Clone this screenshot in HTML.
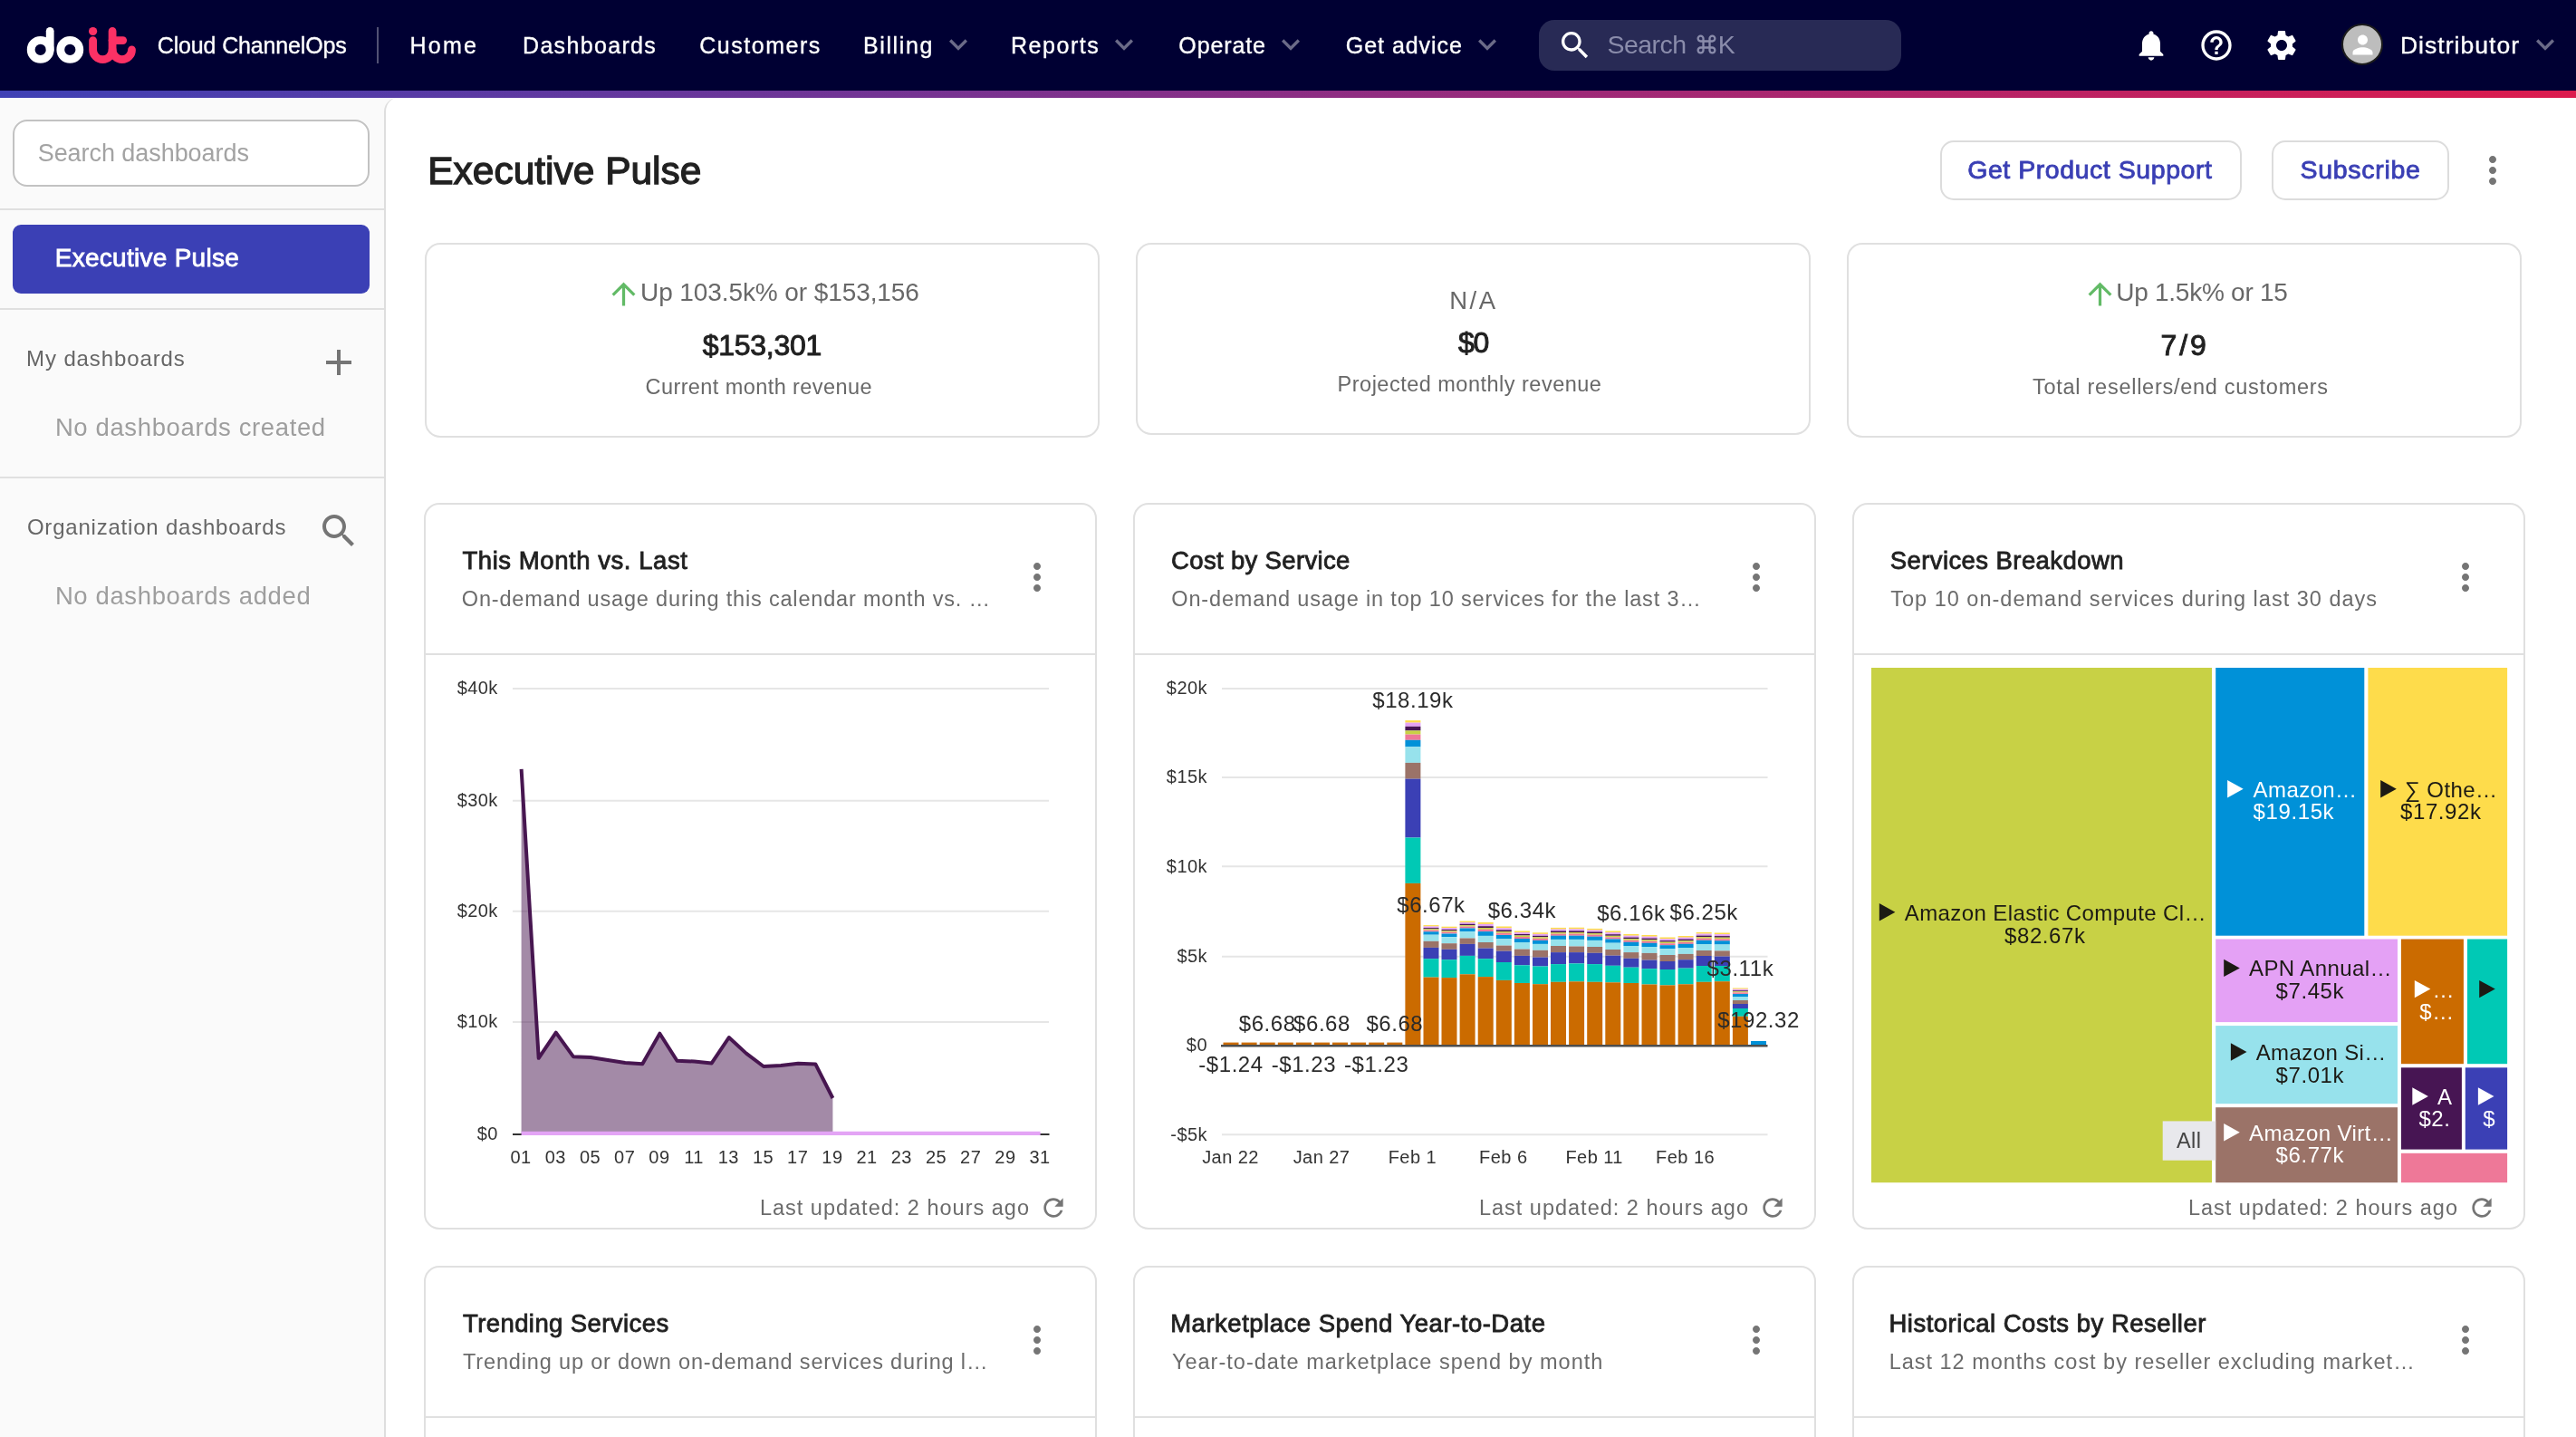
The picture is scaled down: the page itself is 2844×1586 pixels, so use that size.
<!DOCTYPE html>
<html lang="en"><head><meta charset="utf-8"><title>Executive Pulse</title>
<style>
*{box-sizing:border-box;margin:0;padding:0}
html,body{width:2844px;height:1586px;overflow:hidden;background:#ffffff}
body{position:relative;font-family:"Liberation Sans",sans-serif}
#app{position:absolute;left:0;top:0;width:2844px;height:1586px;overflow:hidden;will-change:transform}
.t{position:absolute;white-space:nowrap;display:block}
.i{position:absolute;display:block;overflow:visible}
.nav{position:absolute;left:0;top:0;width:2844px;height:100px;background:#000033}
.grad{position:absolute;left:0;top:100px;width:2844px;height:8px;background:linear-gradient(90deg,#3f41b5 0%,#8b2e84 50%,#dc1b4d 100%)}
.vdiv{position:absolute;width:2px;background:rgba(255,255,255,.32)}
.srch{position:absolute;background:#282a55;border-radius:17px}
.ava{position:absolute;width:46px;height:46px;border-radius:50%;background:#bdbdbd;border:2px solid #1c1c1c}
.side{position:absolute;left:0;top:108px;width:440px;height:1478px;background:#fafafa;border-top:1px solid #ffffff}
.side>*{margin-top:-109px}
.sbox{position:absolute;background:#ffffff;border:2px solid #c2c2c2;border-radius:16px}
.act{position:absolute;background:#3b40b5;border-radius:9px}
.hdiv{position:absolute;height:2px;background:#e0e0e0}
.main{position:absolute;left:0;top:0;width:0;height:0}
.panel{position:absolute;left:424px;top:108px;width:2440px;height:1500px;background:#ffffff;border-left:2px solid #dedede;border-radius:15px 0 0 0}
.btn{position:absolute;border:2px solid #dcdcdc;border-radius:15px;background:#ffffff}
.kpi{position:absolute;border:2px solid #e0e0e0;border-radius:17px;background:#ffffff}
.card{position:absolute;border:2px solid #e0e0e0;border-radius:17px;background:#ffffff}
</style></head><body><div id="app">
<header class="nav">
<svg class="i" style="left:0;top:0" width="170" height="100" viewBox="0 0 170 100" fill="none" stroke-linecap="round" stroke-linejoin="round" stroke-width="8.8">
<g stroke="#ffffff"><circle cx="44.7" cy="54.9" r="10.5"/><path d="M55.2 34.3V54.9"/><circle cx="77.3" cy="54.9" r="10.5"/></g>
<g stroke="#fc3165"><path d="M102.6 44.6V54.9A10.75 10.75 0 0 0 124.1 54.9V34.4"/><path d="M124.1 54.9A10.7 10.7 0 0 0 145.5 54.9"/><path d="M124.1 44.6H135.7"/></g>
<circle cx="102.6" cy="34.5" r="4.6" fill="#fc3165"/></svg>
<i class="vdiv" style="left:416px;top:30px;height:40px"></i>
<svg class="i" style="left:1037.7px;top:29.4px;" width="40" height="40" viewBox="0 0 24 24"><path fill="rgba(255,255,255,.42)" d="M16.59 8.59L12 13.17 7.41 8.59 6 10l6 6 6-6z"/></svg>
<svg class="i" style="left:1220.7px;top:29.4px;" width="40" height="40" viewBox="0 0 24 24"><path fill="rgba(255,255,255,.42)" d="M16.59 8.59L12 13.17 7.41 8.59 6 10l6 6 6-6z"/></svg>
<svg class="i" style="left:1405.2px;top:29.4px;" width="40" height="40" viewBox="0 0 24 24"><path fill="rgba(255,255,255,.42)" d="M16.59 8.59L12 13.17 7.41 8.59 6 10l6 6 6-6z"/></svg>
<svg class="i" style="left:1622.2px;top:29.4px;" width="40" height="40" viewBox="0 0 24 24"><path fill="rgba(255,255,255,.42)" d="M16.59 8.59L12 13.17 7.41 8.59 6 10l6 6 6-6z"/></svg>
<svg class="i" style="left:2789.7px;top:29.4px;" width="40" height="40" viewBox="0 0 24 24"><path fill="rgba(255,255,255,.42)" d="M16.59 8.59L12 13.17 7.41 8.59 6 10l6 6 6-6z"/></svg>
<div class="srch" style="left:1699px;top:22px;width:400px;height:56px"></div>
<svg class="i" style="left:1719.0px;top:30.0px;" width="40" height="40" viewBox="0 0 24 24"><path fill="#ffffff" d="M15.5 14h-.79l-.28-.27C15.41 12.59 16 11.11 16 9.5 16 5.91 13.09 3 9.5 3S3 5.91 3 9.5 5.91 16 9.5 16c1.61 0 3.09-.59 4.23-1.57l.27.28v.79l5 4.99L20.49 19l-4.99-5zm-6 0C7.01 14 5 11.99 5 9.5S7.01 5 9.5 5 14 7.01 14 9.5 11.99 14 9.5 14z"/></svg>
<svg class="i" style="left:1869.5px;top:35.0px;" width="28" height="28" viewBox="0 0 24 24"><path fill="#8a8cab" d="M17.5 3C15.57 3 14 4.57 14 6.5V8h-4V6.5C10 4.57 8.43 3 6.5 3S3 4.57 3 6.5 4.57 10 6.5 10H8v4H6.5C4.57 14 3 15.57 3 17.5S4.57 21 6.5 21s3.5-1.57 3.5-3.5V16h4v1.5c0 1.93 1.57 3.5 3.5 3.5s3.5-1.57 3.5-3.5-1.57-3.5-3.5-3.5H16v-4h1.5c1.93 0 3.5-1.57 3.5-3.5S19.43 3 17.5 3zM16 8V6.5c0-.83.67-1.5 1.5-1.5s1.5.67 1.5 1.5S18.33 8 17.5 8H16zM6.5 8C5.67 8 5 7.33 5 6.5S5.67 5 6.5 5 8 5.67 8 6.5V8H6.5zm3.5 6v-4h4v4h-4zm7.5 5c-.83 0-1.5-.67-1.5-1.5V16h1.5c.83 0 1.5.67 1.5 1.5s-.67 1.5-1.5 1.5zm-11 0c-.83 0-1.5-.67-1.5-1.5S5.67 16 6.5 16H8v1.5c0 .83-.67 1.5-1.5 1.5z"/></svg>
<svg class="i" style="left:2355.0px;top:30.0px;" width="40" height="40" viewBox="0 0 24 24"><path fill="#ffffff" d="M12 22c1.1 0 2-.9 2-2h-4c0 1.1.89 2 2 2zm6-6v-5c0-3.07-1.64-5.64-4.5-6.32V4c0-.83-.67-1.5-1.5-1.5s-1.5.67-1.5 1.5v.68C7.63 5.36 6 7.92 6 11v5l-2 2v1h16v-1l-2-2z"/></svg>
<svg class="i" style="left:2427.0px;top:30.0px;" width="40" height="40" viewBox="0 0 24 24"><path fill="#ffffff" d="M11 18h2v-2h-2v2zm1-16C6.48 2 2 6.48 2 12s4.48 10 10 10 10-4.48 10-10S17.52 2 12 2zm0 18c-4.41 0-8-3.59-8-8s3.59-8 8-8 8 3.59 8 8-3.59 8-8 8zm0-14c-2.21 0-4 1.79-4 4h2c0-1.1.9-2 2-2s2 .9 2 2c0 2-3 1.75-3 5h2c0-2.25 3-2.5 3-5 0-2.21-1.79-4-4-4z"/></svg>
<svg class="i" style="left:2499.0px;top:30.0px;" width="40" height="40" viewBox="0 0 24 24"><path fill="#ffffff" d="M19.14 12.94c.04-.3.06-.61.06-.94 0-.32-.02-.64-.07-.94l2.03-1.58c.18-.14.23-.41.12-.61l-1.92-3.32c-.12-.22-.37-.29-.59-.22l-2.39.96c-.5-.38-1.03-.7-1.62-.94l-.36-2.54c-.04-.24-.24-.41-.48-.41h-3.84c-.24 0-.43.17-.47.41l-.36 2.54c-.59.24-1.13.57-1.62.94l-2.39-.96c-.22-.08-.47 0-.59.22L2.74 8.87c-.12.21-.08.47.12.61l2.03 1.58c-.05.3-.09.63-.09.94s.02.64.07.94l-2.03 1.58c-.18.14-.23.41-.12.61l1.92 3.32c.12.22.37.29.59.22l2.39-.96c.5.38 1.03.7 1.62.94l.36 2.54c.05.24.24.41.48.41h3.84c.24 0 .44-.17.47-.41l.36-2.54c.59-.24 1.13-.56 1.62-.94l2.39.96c.22.08.47 0 .59-.22l1.92-3.32c.12-.22.07-.47-.12-.61l-2.01-1.58zM12 15.6c-1.98 0-3.6-1.62-3.6-3.6s1.62-3.6 3.6-3.6 3.6 1.62 3.6 3.6-1.62 3.6-3.6 3.6z"/></svg>
<div class="ava" style="left:2585px;top:26px"></div>
<svg class="i" style="left:2591.5px;top:32.5px;" width="33" height="33" viewBox="0 0 24 24"><path fill="#ffffff" d="M12 12c2.21 0 4-1.79 4-4s-1.79-4-4-4-4 1.79-4 4 1.79 4 4 4zm0 2c-2.67 0-8 1.34-8 4v2h16v-2c0-2.66-5.33-4-8-4z"/></svg>
<span class="t" style="left:173.8px;top:34.9px;font-size:25px;line-height:30px;letter-spacing:-0.15px;color:#ffffff;-webkit-text-stroke:0.35px #ffffff;">Cloud ChannelOps</span>
<span class="t" style="left:452.5px;top:34.9px;font-size:25px;line-height:30px;letter-spacing:2.26px;color:#ffffff;-webkit-text-stroke:0.35px #ffffff;">Home</span>
<span class="t" style="left:577.0px;top:34.9px;font-size:25px;line-height:30px;letter-spacing:1.33px;color:#ffffff;-webkit-text-stroke:0.35px #ffffff;">Dashboards</span>
<span class="t" style="left:772.3px;top:34.9px;font-size:25px;line-height:30px;letter-spacing:1.51px;color:#ffffff;-webkit-text-stroke:0.35px #ffffff;">Customers</span>
<span class="t" style="left:953.0px;top:34.9px;font-size:25px;line-height:30px;letter-spacing:1.61px;color:#ffffff;-webkit-text-stroke:0.35px #ffffff;">Billing</span>
<span class="t" style="left:1116.0px;top:34.9px;font-size:25px;line-height:30px;letter-spacing:1.53px;color:#ffffff;-webkit-text-stroke:0.35px #ffffff;">Reports</span>
<span class="t" style="left:1301.3px;top:34.9px;font-size:25px;line-height:30px;letter-spacing:0.89px;color:#ffffff;-webkit-text-stroke:0.35px #ffffff;">Operate</span>
<span class="t" style="left:1485.8px;top:34.9px;font-size:25px;line-height:30px;letter-spacing:0.96px;color:#ffffff;-webkit-text-stroke:0.35px #ffffff;">Get advice</span>
<span class="t" style="left:1774.6px;top:32.3px;font-size:28.5px;line-height:34px;letter-spacing:-0.56px;color:#8a8cab;">Search</span>
<span class="t" style="left:1896.8px;top:32.3px;font-size:28.5px;line-height:34px;letter-spacing:0.00px;color:#8a8cab;">K</span>
<span class="t" style="left:2649.9px;top:33.8px;font-size:26.5px;line-height:32px;letter-spacing:1.04px;color:#ffffff;-webkit-text-stroke:0.35px #ffffff;">Distributor</span>
</header><div class="grad"></div>
<aside class="side">
<div class="sbox" style="left:14px;top:132px;width:394px;height:74px"></div>
<i class="hdiv" style="left:0;top:230px;width:424px"></i>
<div class="act" style="left:14px;top:248px;width:394px;height:76px"></div>
<i class="hdiv" style="left:0;top:340px;width:424px"></i>
<svg class="i" style="left:350.0px;top:376.0px;" width="48" height="48" viewBox="0 0 24 24"><path fill="#757575" d="M19 13h-6v6h-2v-6H5v-2h6V5h2v6h6v2z"/></svg>
<i class="hdiv" style="left:0;top:526px;width:424px"></i>
<svg class="i" style="left:350.0px;top:562.0px;" width="48" height="48" viewBox="0 0 24 24"><path fill="#757575" d="M15.5 14h-.79l-.28-.27C15.41 12.59 16 11.11 16 9.5 16 5.91 13.09 3 9.5 3S3 5.91 3 9.5 5.91 16 9.5 16c1.61 0 3.09-.59 4.23-1.57l.27.28v.79l5 4.99L20.49 19l-4.99-5zm-6 0C7.01 14 5 11.99 5 9.5S7.01 5 9.5 5 14 7.01 14 9.5 11.99 14 9.5 14z"/></svg>
<span class="t" style="left:41.7px;top:152.6px;font-size:27px;line-height:32px;letter-spacing:-0.06px;color:#a3a3a3;">Search dashboards</span>
<span class="t" style="left:60.8px;top:268.0px;font-size:28px;line-height:34px;letter-spacing:0.27px;color:#ffffff;-webkit-text-stroke:0.84px #ffffff;">Executive Pulse</span>
<span class="t" style="left:29.1px;top:380.7px;font-size:24px;line-height:29px;letter-spacing:0.88px;color:#666666;">My dashboards</span>
<span class="t" style="left:60.9px;top:455.0px;font-size:27.5px;line-height:33px;letter-spacing:0.62px;color:#9e9e9e;">No dashboards created</span>
<span class="t" style="left:29.9px;top:567.2px;font-size:24px;line-height:29px;letter-spacing:0.79px;color:#666666;">Organization dashboards</span>
<span class="t" style="left:60.9px;top:641.0px;font-size:27.5px;line-height:33px;letter-spacing:0.62px;color:#9e9e9e;">No dashboards added</span>
</aside>
<main class="main"><div class="panel"></div>
<div class="btn" style="left:2142px;top:155px;width:333px;height:66px"></div>
<div class="btn" style="left:2508px;top:155px;width:196px;height:66px"></div>
<svg class="i" style="left:2728.0px;top:164.0px;" width="48" height="48" viewBox="0 0 24 24"><path fill="#757575" d="M12 8c1.1 0 2-.9 2-2s-.9-2-2-2-2 .9-2 2 .9 2 2 2zm0 2c-1.1 0-2 .9-2 2s.9 2 2 2 2-.9 2-2-.9-2-2-2zm0 6c-1.1 0-2 .9-2 2s.9 2 2 2 2-.9 2-2-.9-2-2-2z"/></svg>
<div class="kpi" style="left:469px;top:268px;width:745px;height:215px"></div>
<div class="kpi" style="left:1254px;top:268px;width:745px;height:212px"></div>
<div class="kpi" style="left:2039px;top:268px;width:745px;height:215px"></div>
<svg class="i" style="left:668.5px;top:304.5px;" width="39" height="39" viewBox="0 0 24 24"><path fill="#62ba66" d="M4 12l1.41 1.41L11 7.83V20h2V7.83l5.58 5.59L20 12l-8-8-8 8z"/></svg>
<svg class="i" style="left:2299.3px;top:304.5px;" width="39" height="39" viewBox="0 0 24 24"><path fill="#62ba66" d="M4 12l1.41 1.41L11 7.83V20h2V7.83l5.58 5.59L20 12l-8-8-8 8z"/></svg>
<span class="t" style="left:472.3px;top:162.5px;font-size:42.5px;line-height:51px;letter-spacing:-0.02px;color:#212121;-webkit-text-stroke:1.27px #212121;">Executive Pulse</span>
<span class="t" style="left:2172.2px;top:170.3px;font-size:28.5px;line-height:34px;letter-spacing:0.55px;color:#3a3fb4;-webkit-text-stroke:0.85px #3a3fb4;">Get Product Support</span>
<span class="t" style="left:2539.5px;top:170.3px;font-size:28.5px;line-height:34px;letter-spacing:0.71px;color:#3a3fb4;-webkit-text-stroke:0.85px #3a3fb4;">Subscribe</span>
<span class="t" style="left:707.0px;top:306.3px;font-size:28px;line-height:34px;letter-spacing:-0.09px;color:#686868;">Up 103.5k% or $153,156</span>
<span class="t" style="left:775.7px;top:361.7px;font-size:32px;line-height:38px;letter-spacing:-0.27px;color:#212121;-webkit-text-stroke:0.96px #212121;">$153,301</span>
<span class="t" style="left:712.5px;top:412.9px;font-size:23.5px;line-height:28px;letter-spacing:0.42px;color:#686868;">Current month revenue</span>
<span class="t" style="left:1600.2px;top:314.9px;font-size:27.5px;line-height:33px;letter-spacing:2.54px;color:#686868;">N/A</span>
<span class="t" style="left:1610.0px;top:358.8px;font-size:32px;line-height:38px;letter-spacing:-1.40px;color:#212121;-webkit-text-stroke:0.96px #212121;">$0</span>
<span class="t" style="left:1476.6px;top:409.7px;font-size:23.5px;line-height:28px;letter-spacing:0.49px;color:#686868;">Projected monthly revenue</span>
<span class="t" style="left:2336.2px;top:305.7px;font-size:28px;line-height:34px;letter-spacing:-0.25px;color:#686868;">Up 1.5k% or 15</span>
<span class="t" style="left:2385.5px;top:361.8px;font-size:32px;line-height:38px;letter-spacing:2.96px;color:#212121;-webkit-text-stroke:0.96px #212121;">7/9</span>
<span class="t" style="left:2244.0px;top:412.6px;font-size:23.5px;line-height:28px;letter-spacing:0.73px;color:#686868;">Total resellers/end customers</span>
<section class="card" style="left:468px;top:555px;width:743px;height:802px"></section>
<i class="hdiv" style="left:470px;top:721px;width:739px"></i>
<svg class="i" style="left:1120.7px;top:613.0px;" width="48" height="48" viewBox="0 0 24 24"><path fill="#757575" d="M12 8c1.1 0 2-.9 2-2s-.9-2-2-2-2 .9-2 2 .9 2 2 2zm0 2c-1.1 0-2 .9-2 2s.9 2 2 2 2-.9 2-2-.9-2-2-2zm0 6c-1.1 0-2 .9-2 2s.9 2 2 2 2-.9 2-2-.9-2-2-2z"/></svg>
<svg class="i" style="left:1147.0px;top:1317.0px;" width="32" height="32" viewBox="0 0 24 24"><path fill="#757575" d="M17.65 6.35C16.2 4.9 14.21 4 12 4c-4.42 0-7.99 3.58-7.99 8s3.57 8 7.99 8c3.73 0 6.84-2.55 7.73-6h-2.08c-.82 2.33-3.04 4-5.65 4-3.31 0-6-2.69-6-6s2.69-6 6-6c1.66 0 3.14.69 4.22 1.78L13 11h7V4l-2.35 2.35z"/></svg>
<span class="t" style="left:510.5px;top:601.7px;font-size:27.5px;line-height:33px;letter-spacing:0.55px;color:#212121;-webkit-text-stroke:0.82px #212121;">This Month vs. Last</span>
<span class="t" style="left:509.8px;top:646.9px;font-size:23.5px;line-height:28px;letter-spacing:0.82px;color:#6b6b6b;">On-demand usage during this calendar month vs. …</span>
<span class="t" style="left:838.9px;top:1318.7px;font-size:23.5px;line-height:28px;letter-spacing:1.00px;color:#6b6b6b;">Last updated: 2 hours ago</span>
<section class="card" style="left:1251px;top:555px;width:754px;height:802px"></section>
<i class="hdiv" style="left:1253px;top:721px;width:750px"></i>
<svg class="i" style="left:1914.7px;top:613.0px;" width="48" height="48" viewBox="0 0 24 24"><path fill="#757575" d="M12 8c1.1 0 2-.9 2-2s-.9-2-2-2-2 .9-2 2 .9 2 2 2zm0 2c-1.1 0-2 .9-2 2s.9 2 2 2 2-.9 2-2-.9-2-2-2zm0 6c-1.1 0-2 .9-2 2s.9 2 2 2 2-.9 2-2-.9-2-2-2z"/></svg>
<svg class="i" style="left:1941.0px;top:1317.0px;" width="32" height="32" viewBox="0 0 24 24"><path fill="#757575" d="M17.65 6.35C16.2 4.9 14.21 4 12 4c-4.42 0-7.99 3.58-7.99 8s3.57 8 7.99 8c3.73 0 6.84-2.55 7.73-6h-2.08c-.82 2.33-3.04 4-5.65 4-3.31 0-6-2.69-6-6s2.69-6 6-6c1.66 0 3.14.69 4.22 1.78L13 11h7V4l-2.35 2.35z"/></svg>
<span class="t" style="left:1293.1px;top:601.7px;font-size:27.5px;line-height:33px;letter-spacing:0.33px;color:#212121;-webkit-text-stroke:0.82px #212121;">Cost by Service</span>
<span class="t" style="left:1293.3px;top:646.9px;font-size:23.5px;line-height:28px;letter-spacing:0.84px;color:#6b6b6b;">On-demand usage in top 10 services for the last 3…</span>
<span class="t" style="left:1632.9px;top:1318.7px;font-size:23.5px;line-height:28px;letter-spacing:1.00px;color:#6b6b6b;">Last updated: 2 hours ago</span>
<section class="card" style="left:2045px;top:555px;width:743px;height:802px"></section>
<i class="hdiv" style="left:2047px;top:721px;width:739px"></i>
<svg class="i" style="left:2697.7px;top:613.0px;" width="48" height="48" viewBox="0 0 24 24"><path fill="#757575" d="M12 8c1.1 0 2-.9 2-2s-.9-2-2-2-2 .9-2 2 .9 2 2 2zm0 2c-1.1 0-2 .9-2 2s.9 2 2 2 2-.9 2-2-.9-2-2-2zm0 6c-1.1 0-2 .9-2 2s.9 2 2 2 2-.9 2-2-.9-2-2-2z"/></svg>
<svg class="i" style="left:2724.0px;top:1317.0px;" width="32" height="32" viewBox="0 0 24 24"><path fill="#757575" d="M17.65 6.35C16.2 4.9 14.21 4 12 4c-4.42 0-7.99 3.58-7.99 8s3.57 8 7.99 8c3.73 0 6.84-2.55 7.73-6h-2.08c-.82 2.33-3.04 4-5.65 4-3.31 0-6-2.69-6-6s2.69-6 6-6c1.66 0 3.14.69 4.22 1.78L13 11h7V4l-2.35 2.35z"/></svg>
<span class="t" style="left:2086.7px;top:601.7px;font-size:27.5px;line-height:33px;letter-spacing:0.42px;color:#212121;-webkit-text-stroke:0.82px #212121;">Services Breakdown</span>
<span class="t" style="left:2087.2px;top:646.9px;font-size:23.5px;line-height:28px;letter-spacing:1.01px;color:#6b6b6b;">Top 10 on-demand services during last 30 days</span>
<span class="t" style="left:2415.9px;top:1318.7px;font-size:23.5px;line-height:28px;letter-spacing:1.00px;color:#6b6b6b;">Last updated: 2 hours ago</span>
<section class="card" style="left:468px;top:1397px;width:743px;height:303px"></section>
<i class="hdiv" style="left:470px;top:1563px;width:739px"></i>
<svg class="i" style="left:1120.7px;top:1455.0px;" width="48" height="48" viewBox="0 0 24 24"><path fill="#757575" d="M12 8c1.1 0 2-.9 2-2s-.9-2-2-2-2 .9-2 2 .9 2 2 2zm0 2c-1.1 0-2 .9-2 2s.9 2 2 2 2-.9 2-2-.9-2-2-2zm0 6c-1.1 0-2 .9-2 2s.9 2 2 2 2-.9 2-2-.9-2-2-2z"/></svg>
<span class="t" style="left:511.0px;top:1443.7px;font-size:27.5px;line-height:33px;letter-spacing:0.41px;color:#212121;-webkit-text-stroke:0.82px #212121;">Trending Services</span>
<span class="t" style="left:511.0px;top:1488.9px;font-size:23.5px;line-height:28px;letter-spacing:0.84px;color:#6b6b6b;">Trending up or down on-demand services during l…</span>
<section class="card" style="left:1251px;top:1397px;width:754px;height:303px"></section>
<i class="hdiv" style="left:1253px;top:1563px;width:750px"></i>
<svg class="i" style="left:1914.7px;top:1455.0px;" width="48" height="48" viewBox="0 0 24 24"><path fill="#757575" d="M12 8c1.1 0 2-.9 2-2s-.9-2-2-2-2 .9-2 2 .9 2 2 2zm0 2c-1.1 0-2 .9-2 2s.9 2 2 2 2-.9 2-2-.9-2-2-2zm0 6c-1.1 0-2 .9-2 2s.9 2 2 2 2-.9 2-2-.9-2-2-2z"/></svg>
<span class="t" style="left:1292.2px;top:1443.7px;font-size:27.5px;line-height:33px;letter-spacing:0.51px;color:#212121;-webkit-text-stroke:0.82px #212121;">Marketplace Spend Year-to-Date</span>
<span class="t" style="left:1293.9px;top:1488.9px;font-size:23.5px;line-height:28px;letter-spacing:1.02px;color:#6b6b6b;">Year-to-date marketplace spend by month</span>
<section class="card" style="left:2045px;top:1397px;width:743px;height:303px"></section>
<i class="hdiv" style="left:2047px;top:1563px;width:739px"></i>
<svg class="i" style="left:2697.7px;top:1455.0px;" width="48" height="48" viewBox="0 0 24 24"><path fill="#757575" d="M12 8c1.1 0 2-.9 2-2s-.9-2-2-2-2 .9-2 2 .9 2 2 2zm0 2c-1.1 0-2 .9-2 2s.9 2 2 2 2-.9 2-2-.9-2-2-2zm0 6c-1.1 0-2 .9-2 2s.9 2 2 2 2-.9 2-2-.9-2-2-2z"/></svg>
<span class="t" style="left:2085.4px;top:1443.7px;font-size:27.5px;line-height:33px;letter-spacing:0.51px;color:#212121;-webkit-text-stroke:0.82px #212121;">Historical Costs by Reseller</span>
<span class="t" style="left:2085.7px;top:1488.9px;font-size:23.5px;line-height:28px;letter-spacing:0.98px;color:#6b6b6b;">Last 12 months cost by reseller excluding market…</span>
<svg class="i" style="left:468px;top:555px" width="743" height="802" viewBox="468 555 743 802" font-family="Liberation Sans, sans-serif">
<path d="M566 760H1158" stroke="#e6e6e6" stroke-width="2"/>
<path d="M566 883.8H1158" stroke="#e6e6e6" stroke-width="2"/>
<path d="M566 1005.8H1158" stroke="#e6e6e6" stroke-width="2"/>
<path d="M566 1128H1158" stroke="#e6e6e6" stroke-width="2"/>
<text x="549.8" y="766.3" text-anchor="end" style="font-size:20px;fill:#333333;letter-spacing:.45px">$40k</text>
<text x="549.8" y="890.0999999999999" text-anchor="end" style="font-size:20px;fill:#333333;letter-spacing:.45px">$30k</text>
<text x="549.8" y="1012.0999999999999" text-anchor="end" style="font-size:20px;fill:#333333;letter-spacing:.45px">$20k</text>
<text x="549.8" y="1134.3" text-anchor="end" style="font-size:20px;fill:#333333;letter-spacing:.45px">$10k</text>
<text x="549.8" y="1258.3" text-anchor="end" style="font-size:20px;fill:#333333;letter-spacing:.45px">$0</text>
<polygon points="575.6,1251 575.6,848.8 594.7,1167.8 613.8,1139.6 632.9,1166.2 652.0,1167.1 671.1,1170 690.2,1173 709.3,1174.3 728.4,1140.7 747.5,1170.8 766.6,1171.5 785.7,1173.4 804.8,1145 823.9,1162.6 843.0,1177 862.1,1176 881.2,1173.8 900.3,1174.4 919.4,1212 919.4,1251" fill="#471650" fill-opacity=".5"/>
<polyline points="575.6,848.8 594.7,1167.8 613.8,1139.6 632.9,1166.2 652.0,1167.1 671.1,1170 690.2,1173 709.3,1174.3 728.4,1140.7 747.5,1170.8 766.6,1171.5 785.7,1173.4 804.8,1145 823.9,1162.6 843.0,1177 862.1,1176 881.2,1173.8 900.3,1174.4 919.4,1212" fill="none" stroke="#471650" stroke-width="4" stroke-linejoin="round"/>
<path d="M566 1252H1158.5" stroke="#333333" stroke-width="2"/>
<path d="M575.6 1250.8H1148.6" stroke="#e3a4f5" stroke-width="4.2"/>
<text x="575.1" y="1284.2" text-anchor="middle" style="font-size:20px;fill:#333333;letter-spacing:.45px">01</text>
<text x="613.3" y="1284.2" text-anchor="middle" style="font-size:20px;fill:#333333;letter-spacing:.45px">03</text>
<text x="651.5" y="1284.2" text-anchor="middle" style="font-size:20px;fill:#333333;letter-spacing:.45px">05</text>
<text x="689.7" y="1284.2" text-anchor="middle" style="font-size:20px;fill:#333333;letter-spacing:.45px">07</text>
<text x="727.9" y="1284.2" text-anchor="middle" style="font-size:20px;fill:#333333;letter-spacing:.45px">09</text>
<text x="766.1" y="1284.2" text-anchor="middle" style="font-size:20px;fill:#333333;letter-spacing:.45px">11</text>
<text x="804.3" y="1284.2" text-anchor="middle" style="font-size:20px;fill:#333333;letter-spacing:.45px">13</text>
<text x="842.5" y="1284.2" text-anchor="middle" style="font-size:20px;fill:#333333;letter-spacing:.45px">15</text>
<text x="880.7" y="1284.2" text-anchor="middle" style="font-size:20px;fill:#333333;letter-spacing:.45px">17</text>
<text x="918.9" y="1284.2" text-anchor="middle" style="font-size:20px;fill:#333333;letter-spacing:.45px">19</text>
<text x="957.1" y="1284.2" text-anchor="middle" style="font-size:20px;fill:#333333;letter-spacing:.45px">21</text>
<text x="995.3" y="1284.2" text-anchor="middle" style="font-size:20px;fill:#333333;letter-spacing:.45px">23</text>
<text x="1033.5" y="1284.2" text-anchor="middle" style="font-size:20px;fill:#333333;letter-spacing:.45px">25</text>
<text x="1071.7" y="1284.2" text-anchor="middle" style="font-size:20px;fill:#333333;letter-spacing:.45px">27</text>
<text x="1109.9" y="1284.2" text-anchor="middle" style="font-size:20px;fill:#333333;letter-spacing:.45px">29</text>
<text x="1148.1" y="1284.2" text-anchor="middle" style="font-size:20px;fill:#333333;letter-spacing:.45px">31</text>
</svg>
<svg class="i" style="left:1251px;top:555px" width="754" height="802" viewBox="1251 555 754 802" font-family="Liberation Sans, sans-serif">
<path d="M1349 760H1951.5" stroke="#e6e6e6" stroke-width="2"/>
<path d="M1349 858H1951.5" stroke="#e6e6e6" stroke-width="2"/>
<path d="M1349 956.3H1951.5" stroke="#e6e6e6" stroke-width="2"/>
<path d="M1349 1055.8H1951.5" stroke="#e6e6e6" stroke-width="2"/>
<path d="M1349 1252.3H1951.5" stroke="#e6e6e6" stroke-width="2"/>
<text x="1333" y="766.3" text-anchor="end" style="font-size:20px;fill:#333333;letter-spacing:.45px">$20k</text>
<text x="1333" y="864.3" text-anchor="end" style="font-size:20px;fill:#333333;letter-spacing:.45px">$15k</text>
<text x="1333" y="962.5999999999999" text-anchor="end" style="font-size:20px;fill:#333333;letter-spacing:.45px">$10k</text>
<text x="1333" y="1062.1" text-anchor="end" style="font-size:20px;fill:#333333;letter-spacing:.45px">$5k</text>
<text x="1333" y="1160.3" text-anchor="end" style="font-size:20px;fill:#333333;letter-spacing:.45px">$0</text>
<text x="1333" y="1258.6" text-anchor="end" style="font-size:20px;fill:#333333;letter-spacing:.45px">-$5k</text>
<rect x="1350.5" y="1150.6" width="17.0" height="2.6" fill="#cb6b00"/>
<rect x="1370.6" y="1150.6" width="17.0" height="2.6" fill="#cb6b00"/>
<rect x="1390.7" y="1150.6" width="17.0" height="2.6" fill="#cb6b00"/>
<rect x="1410.8" y="1150.6" width="17.0" height="2.6" fill="#cb6b00"/>
<rect x="1430.9" y="1150.6" width="17.0" height="2.6" fill="#cb6b00"/>
<rect x="1451.0" y="1150.6" width="17.0" height="2.6" fill="#cb6b00"/>
<rect x="1471.0" y="1150.6" width="17.0" height="2.6" fill="#cb6b00"/>
<rect x="1491.1" y="1150.6" width="17.0" height="2.6" fill="#cb6b00"/>
<rect x="1511.2" y="1150.6" width="17.0" height="2.6" fill="#cb6b00"/>
<rect x="1531.3" y="1150.6" width="17.0" height="2.6" fill="#cb6b00"/>
<rect x="1551.4" y="795.1" width="17.0" height="2.5" fill="#fedc4b"/>
<rect x="1551.4" y="797.6" width="17.0" height="4.2" fill="#e4a1f5"/>
<rect x="1551.4" y="801.8" width="17.0" height="4.6" fill="#471553"/>
<rect x="1551.4" y="806.4" width="17.0" height="4.2" fill="#c8d145"/>
<rect x="1551.4" y="810.6" width="17.0" height="6.2" fill="#ee7898"/>
<rect x="1551.4" y="816.8" width="17.0" height="7.5" fill="#0091d8"/>
<rect x="1551.4" y="824.3" width="17.0" height="17.6" fill="#97e2ec"/>
<rect x="1551.4" y="841.9" width="17.0" height="17.7" fill="#9b7368"/>
<rect x="1551.4" y="859.6" width="17.0" height="64.9" fill="#3b40b5"/>
<rect x="1551.4" y="924.5" width="17.0" height="50.4" fill="#00c9b5"/>
<rect x="1551.4" y="974.9" width="17.0" height="178.3" fill="#cb6b00"/>
<rect x="1571.5" y="1021.1" width="17.0" height="1.4" fill="#fedc4b"/>
<rect x="1571.5" y="1022.5" width="17.0" height="1.6" fill="#e4a1f5"/>
<rect x="1571.5" y="1024.1" width="17.0" height="1.3" fill="#471553"/>
<rect x="1571.5" y="1025.3" width="17.0" height="1.3" fill="#c8d145"/>
<rect x="1571.5" y="1026.6" width="17.0" height="1.7" fill="#ee7898"/>
<rect x="1571.5" y="1028.3" width="17.0" height="3.4" fill="#0091d8"/>
<rect x="1571.5" y="1031.7" width="17.0" height="7.1" fill="#97e2ec"/>
<rect x="1571.5" y="1038.8" width="17.0" height="7.1" fill="#9b7368"/>
<rect x="1571.5" y="1045.9" width="17.0" height="12.3" fill="#3b40b5"/>
<rect x="1571.5" y="1058.2" width="17.0" height="20.4" fill="#00c9b5"/>
<rect x="1571.5" y="1078.6" width="17.0" height="74.6" fill="#cb6b00"/>
<rect x="1591.5" y="1022.7" width="17.0" height="1.5" fill="#fedc4b"/>
<rect x="1591.5" y="1024.2" width="17.0" height="1.7" fill="#e4a1f5"/>
<rect x="1591.5" y="1025.9" width="17.0" height="1.4" fill="#471553"/>
<rect x="1591.5" y="1027.3" width="17.0" height="1.4" fill="#c8d145"/>
<rect x="1591.5" y="1028.6" width="17.0" height="1.8" fill="#ee7898"/>
<rect x="1591.5" y="1030.5" width="17.0" height="3.6" fill="#0091d8"/>
<rect x="1591.5" y="1034.1" width="17.0" height="7.1" fill="#97e2ec"/>
<rect x="1591.5" y="1041.2" width="17.0" height="6.6" fill="#9b7368"/>
<rect x="1591.5" y="1047.8" width="17.0" height="11.4" fill="#3b40b5"/>
<rect x="1591.5" y="1059.2" width="17.0" height="19.9" fill="#00c9b5"/>
<rect x="1591.5" y="1079.1" width="17.0" height="74.1" fill="#cb6b00"/>
<rect x="1611.6" y="1016.6" width="17.0" height="1.5" fill="#fedc4b"/>
<rect x="1611.6" y="1018.1" width="17.0" height="1.7" fill="#e4a1f5"/>
<rect x="1611.6" y="1019.8" width="17.0" height="1.4" fill="#471553"/>
<rect x="1611.6" y="1021.2" width="17.0" height="1.4" fill="#c8d145"/>
<rect x="1611.6" y="1022.6" width="17.0" height="1.9" fill="#ee7898"/>
<rect x="1611.6" y="1024.5" width="17.0" height="3.7" fill="#0091d8"/>
<rect x="1611.6" y="1028.2" width="17.0" height="7.3" fill="#97e2ec"/>
<rect x="1611.6" y="1035.5" width="17.0" height="6.4" fill="#9b7368"/>
<rect x="1611.6" y="1041.9" width="17.0" height="13.0" fill="#3b40b5"/>
<rect x="1611.6" y="1054.9" width="17.0" height="20.4" fill="#00c9b5"/>
<rect x="1611.6" y="1075.3" width="17.0" height="77.9" fill="#cb6b00"/>
<rect x="1631.7" y="1018.0" width="17.0" height="1.9" fill="#fedc4b"/>
<rect x="1631.7" y="1019.9" width="17.0" height="2.2" fill="#e4a1f5"/>
<rect x="1631.7" y="1022.2" width="17.0" height="1.8" fill="#471553"/>
<rect x="1631.7" y="1024.0" width="17.0" height="1.8" fill="#c8d145"/>
<rect x="1631.7" y="1025.7" width="17.0" height="2.4" fill="#ee7898"/>
<rect x="1631.7" y="1028.1" width="17.0" height="4.8" fill="#0091d8"/>
<rect x="1631.7" y="1032.9" width="17.0" height="7.1" fill="#97e2ec"/>
<rect x="1631.7" y="1040.0" width="17.0" height="6.6" fill="#9b7368"/>
<rect x="1631.7" y="1046.6" width="17.0" height="11.6" fill="#3b40b5"/>
<rect x="1631.7" y="1058.2" width="17.0" height="19.9" fill="#00c9b5"/>
<rect x="1631.7" y="1078.1" width="17.0" height="75.1" fill="#cb6b00"/>
<rect x="1651.8" y="1022.5" width="17.0" height="1.8" fill="#fedc4b"/>
<rect x="1651.8" y="1024.3" width="17.0" height="2.1" fill="#e4a1f5"/>
<rect x="1651.8" y="1026.4" width="17.0" height="1.7" fill="#471553"/>
<rect x="1651.8" y="1028.1" width="17.0" height="1.7" fill="#c8d145"/>
<rect x="1651.8" y="1029.7" width="17.0" height="2.2" fill="#ee7898"/>
<rect x="1651.8" y="1032.0" width="17.0" height="4.4" fill="#0091d8"/>
<rect x="1651.8" y="1036.4" width="17.0" height="7.2" fill="#97e2ec"/>
<rect x="1651.8" y="1043.6" width="17.0" height="6.1" fill="#9b7368"/>
<rect x="1651.8" y="1049.7" width="17.0" height="12.3" fill="#3b40b5"/>
<rect x="1651.8" y="1062.0" width="17.0" height="19.9" fill="#00c9b5"/>
<rect x="1651.8" y="1081.9" width="17.0" height="71.3" fill="#cb6b00"/>
<rect x="1671.9" y="1027.5" width="17.0" height="1.6" fill="#fedc4b"/>
<rect x="1671.9" y="1029.1" width="17.0" height="1.9" fill="#e4a1f5"/>
<rect x="1671.9" y="1031.0" width="17.0" height="1.5" fill="#471553"/>
<rect x="1671.9" y="1032.5" width="17.0" height="1.5" fill="#c8d145"/>
<rect x="1671.9" y="1034.0" width="17.0" height="2.0" fill="#ee7898"/>
<rect x="1671.9" y="1036.0" width="17.0" height="4.0" fill="#0091d8"/>
<rect x="1671.9" y="1040.0" width="17.0" height="7.6" fill="#97e2ec"/>
<rect x="1671.9" y="1047.6" width="17.0" height="7.3" fill="#9b7368"/>
<rect x="1671.9" y="1054.9" width="17.0" height="10.4" fill="#3b40b5"/>
<rect x="1671.9" y="1065.3" width="17.0" height="19.7" fill="#00c9b5"/>
<rect x="1671.9" y="1085.0" width="17.0" height="68.2" fill="#cb6b00"/>
<rect x="1692.0" y="1029.3" width="17.0" height="1.6" fill="#fedc4b"/>
<rect x="1692.0" y="1030.9" width="17.0" height="1.9" fill="#e4a1f5"/>
<rect x="1692.0" y="1032.8" width="17.0" height="1.5" fill="#471553"/>
<rect x="1692.0" y="1034.3" width="17.0" height="1.5" fill="#c8d145"/>
<rect x="1692.0" y="1035.9" width="17.0" height="2.0" fill="#ee7898"/>
<rect x="1692.0" y="1037.9" width="17.0" height="4.0" fill="#0091d8"/>
<rect x="1692.0" y="1041.9" width="17.0" height="6.9" fill="#97e2ec"/>
<rect x="1692.0" y="1048.8" width="17.0" height="7.8" fill="#9b7368"/>
<rect x="1692.0" y="1056.6" width="17.0" height="9.9" fill="#3b40b5"/>
<rect x="1692.0" y="1066.5" width="17.0" height="19.7" fill="#00c9b5"/>
<rect x="1692.0" y="1086.2" width="17.0" height="67.0" fill="#cb6b00"/>
<rect x="1712.0" y="1023.9" width="17.0" height="1.7" fill="#fedc4b"/>
<rect x="1712.0" y="1025.6" width="17.0" height="2.0" fill="#e4a1f5"/>
<rect x="1712.0" y="1027.5" width="17.0" height="1.6" fill="#471553"/>
<rect x="1712.0" y="1029.1" width="17.0" height="1.6" fill="#c8d145"/>
<rect x="1712.0" y="1030.7" width="17.0" height="2.1" fill="#ee7898"/>
<rect x="1712.0" y="1032.7" width="17.0" height="4.2" fill="#0091d8"/>
<rect x="1712.0" y="1036.9" width="17.0" height="7.1" fill="#97e2ec"/>
<rect x="1712.0" y="1044.0" width="17.0" height="7.1" fill="#9b7368"/>
<rect x="1712.0" y="1051.1" width="17.0" height="13.0" fill="#3b40b5"/>
<rect x="1712.0" y="1064.1" width="17.0" height="19.7" fill="#00c9b5"/>
<rect x="1712.0" y="1083.8" width="17.0" height="69.4" fill="#cb6b00"/>
<rect x="1732.1" y="1023.7" width="17.0" height="1.7" fill="#fedc4b"/>
<rect x="1732.1" y="1025.4" width="17.0" height="2.0" fill="#e4a1f5"/>
<rect x="1732.1" y="1027.4" width="17.0" height="1.6" fill="#471553"/>
<rect x="1732.1" y="1029.0" width="17.0" height="1.6" fill="#c8d145"/>
<rect x="1732.1" y="1030.6" width="17.0" height="2.1" fill="#ee7898"/>
<rect x="1732.1" y="1032.7" width="17.0" height="4.2" fill="#0091d8"/>
<rect x="1732.1" y="1036.9" width="17.0" height="7.6" fill="#97e2ec"/>
<rect x="1732.1" y="1044.5" width="17.0" height="6.6" fill="#9b7368"/>
<rect x="1732.1" y="1051.1" width="17.0" height="12.3" fill="#3b40b5"/>
<rect x="1732.1" y="1063.4" width="17.0" height="19.9" fill="#00c9b5"/>
<rect x="1732.1" y="1083.3" width="17.0" height="69.9" fill="#cb6b00"/>
<rect x="1752.2" y="1024.9" width="17.0" height="1.7" fill="#fedc4b"/>
<rect x="1752.2" y="1026.6" width="17.0" height="2.0" fill="#e4a1f5"/>
<rect x="1752.2" y="1028.5" width="17.0" height="1.6" fill="#471553"/>
<rect x="1752.2" y="1030.1" width="17.0" height="1.6" fill="#c8d145"/>
<rect x="1752.2" y="1031.7" width="17.0" height="2.1" fill="#ee7898"/>
<rect x="1752.2" y="1033.7" width="17.0" height="4.2" fill="#0091d8"/>
<rect x="1752.2" y="1037.9" width="17.0" height="7.1" fill="#97e2ec"/>
<rect x="1752.2" y="1045.0" width="17.0" height="6.8" fill="#9b7368"/>
<rect x="1752.2" y="1051.8" width="17.0" height="12.3" fill="#3b40b5"/>
<rect x="1752.2" y="1064.1" width="17.0" height="19.7" fill="#00c9b5"/>
<rect x="1752.2" y="1083.8" width="17.0" height="69.4" fill="#cb6b00"/>
<rect x="1772.3" y="1027.5" width="17.0" height="1.7" fill="#fedc4b"/>
<rect x="1772.3" y="1029.2" width="17.0" height="2.0" fill="#e4a1f5"/>
<rect x="1772.3" y="1031.2" width="17.0" height="1.6" fill="#471553"/>
<rect x="1772.3" y="1032.8" width="17.0" height="1.6" fill="#c8d145"/>
<rect x="1772.3" y="1034.4" width="17.0" height="2.1" fill="#ee7898"/>
<rect x="1772.3" y="1036.5" width="17.0" height="4.2" fill="#0091d8"/>
<rect x="1772.3" y="1040.7" width="17.0" height="7.3" fill="#97e2ec"/>
<rect x="1772.3" y="1048.0" width="17.0" height="6.7" fill="#9b7368"/>
<rect x="1772.3" y="1054.7" width="17.0" height="11.1" fill="#3b40b5"/>
<rect x="1772.3" y="1065.8" width="17.0" height="18.5" fill="#00c9b5"/>
<rect x="1772.3" y="1084.3" width="17.0" height="68.9" fill="#cb6b00"/>
<rect x="1792.4" y="1031.0" width="17.0" height="1.7" fill="#fedc4b"/>
<rect x="1792.4" y="1032.7" width="17.0" height="2.0" fill="#e4a1f5"/>
<rect x="1792.4" y="1034.6" width="17.0" height="1.6" fill="#471553"/>
<rect x="1792.4" y="1036.2" width="17.0" height="1.6" fill="#c8d145"/>
<rect x="1792.4" y="1037.8" width="17.0" height="2.1" fill="#ee7898"/>
<rect x="1792.4" y="1039.8" width="17.0" height="4.2" fill="#0091d8"/>
<rect x="1792.4" y="1044.0" width="17.0" height="7.1" fill="#97e2ec"/>
<rect x="1792.4" y="1051.1" width="17.0" height="6.7" fill="#9b7368"/>
<rect x="1792.4" y="1057.8" width="17.0" height="9.9" fill="#3b40b5"/>
<rect x="1792.4" y="1067.7" width="17.0" height="17.3" fill="#00c9b5"/>
<rect x="1792.4" y="1085.0" width="17.0" height="68.2" fill="#cb6b00"/>
<rect x="1812.5" y="1032.0" width="17.0" height="1.7" fill="#fedc4b"/>
<rect x="1812.5" y="1033.7" width="17.0" height="2.0" fill="#e4a1f5"/>
<rect x="1812.5" y="1035.6" width="17.0" height="1.6" fill="#471553"/>
<rect x="1812.5" y="1037.2" width="17.0" height="1.6" fill="#c8d145"/>
<rect x="1812.5" y="1038.8" width="17.0" height="2.1" fill="#ee7898"/>
<rect x="1812.5" y="1040.8" width="17.0" height="4.2" fill="#0091d8"/>
<rect x="1812.5" y="1045.0" width="17.0" height="6.9" fill="#97e2ec"/>
<rect x="1812.5" y="1051.9" width="17.0" height="7.7" fill="#9b7368"/>
<rect x="1812.5" y="1059.6" width="17.0" height="9.6" fill="#3b40b5"/>
<rect x="1812.5" y="1069.2" width="17.0" height="17.3" fill="#00c9b5"/>
<rect x="1812.5" y="1086.5" width="17.0" height="66.7" fill="#cb6b00"/>
<rect x="1832.5" y="1034.5" width="17.0" height="1.7" fill="#fedc4b"/>
<rect x="1832.5" y="1036.2" width="17.0" height="1.9" fill="#e4a1f5"/>
<rect x="1832.5" y="1038.1" width="17.0" height="1.5" fill="#471553"/>
<rect x="1832.5" y="1039.6" width="17.0" height="1.5" fill="#c8d145"/>
<rect x="1832.5" y="1041.2" width="17.0" height="2.0" fill="#ee7898"/>
<rect x="1832.5" y="1043.2" width="17.0" height="4.1" fill="#0091d8"/>
<rect x="1832.5" y="1047.3" width="17.0" height="6.7" fill="#97e2ec"/>
<rect x="1832.5" y="1054.0" width="17.0" height="7.0" fill="#9b7368"/>
<rect x="1832.5" y="1061.0" width="17.0" height="9.0" fill="#3b40b5"/>
<rect x="1832.5" y="1070.0" width="17.0" height="17.4" fill="#00c9b5"/>
<rect x="1832.5" y="1087.4" width="17.0" height="65.8" fill="#cb6b00"/>
<rect x="1852.6" y="1033.0" width="17.0" height="1.7" fill="#fedc4b"/>
<rect x="1852.6" y="1034.7" width="17.0" height="2.0" fill="#e4a1f5"/>
<rect x="1852.6" y="1036.6" width="17.0" height="1.6" fill="#471553"/>
<rect x="1852.6" y="1038.2" width="17.0" height="1.6" fill="#c8d145"/>
<rect x="1852.6" y="1039.8" width="17.0" height="2.1" fill="#ee7898"/>
<rect x="1852.6" y="1041.8" width="17.0" height="4.2" fill="#0091d8"/>
<rect x="1852.6" y="1046.0" width="17.0" height="6.9" fill="#97e2ec"/>
<rect x="1852.6" y="1052.9" width="17.0" height="6.3" fill="#9b7368"/>
<rect x="1852.6" y="1059.2" width="17.0" height="9.4" fill="#3b40b5"/>
<rect x="1852.6" y="1068.6" width="17.0" height="17.7" fill="#00c9b5"/>
<rect x="1852.6" y="1086.3" width="17.0" height="66.9" fill="#cb6b00"/>
<rect x="1872.7" y="1028.9" width="17.0" height="1.7" fill="#fedc4b"/>
<rect x="1872.7" y="1030.6" width="17.0" height="2.0" fill="#e4a1f5"/>
<rect x="1872.7" y="1032.6" width="17.0" height="1.6" fill="#471553"/>
<rect x="1872.7" y="1034.1" width="17.0" height="1.6" fill="#c8d145"/>
<rect x="1872.7" y="1035.7" width="17.0" height="2.1" fill="#ee7898"/>
<rect x="1872.7" y="1037.8" width="17.0" height="4.2" fill="#0091d8"/>
<rect x="1872.7" y="1042.0" width="17.0" height="7.0" fill="#97e2ec"/>
<rect x="1872.7" y="1049.0" width="17.0" height="6.0" fill="#9b7368"/>
<rect x="1872.7" y="1055.0" width="17.0" height="11.0" fill="#3b40b5"/>
<rect x="1872.7" y="1066.0" width="17.0" height="17.8" fill="#00c9b5"/>
<rect x="1872.7" y="1083.8" width="17.0" height="69.4" fill="#cb6b00"/>
<rect x="1892.8" y="1029.5" width="17.0" height="1.7" fill="#fedc4b"/>
<rect x="1892.8" y="1031.2" width="17.0" height="2.0" fill="#e4a1f5"/>
<rect x="1892.8" y="1033.1" width="17.0" height="1.6" fill="#471553"/>
<rect x="1892.8" y="1034.7" width="17.0" height="1.6" fill="#c8d145"/>
<rect x="1892.8" y="1036.3" width="17.0" height="2.1" fill="#ee7898"/>
<rect x="1892.8" y="1038.3" width="17.0" height="4.2" fill="#0091d8"/>
<rect x="1892.8" y="1042.5" width="17.0" height="6.9" fill="#97e2ec"/>
<rect x="1892.8" y="1049.4" width="17.0" height="6.2" fill="#9b7368"/>
<rect x="1892.8" y="1055.6" width="17.0" height="10.4" fill="#3b40b5"/>
<rect x="1892.8" y="1066.0" width="17.0" height="17.2" fill="#00c9b5"/>
<rect x="1892.8" y="1083.2" width="17.0" height="70.0" fill="#cb6b00"/>
<rect x="1912.9" y="1090.5" width="17.0" height="1.2" fill="#fedc4b"/>
<rect x="1912.9" y="1091.7" width="17.0" height="1.4" fill="#e4a1f5"/>
<rect x="1912.9" y="1093.2" width="17.0" height="1.1" fill="#471553"/>
<rect x="1912.9" y="1094.3" width="17.0" height="1.1" fill="#c8d145"/>
<rect x="1912.9" y="1095.4" width="17.0" height="1.5" fill="#ee7898"/>
<rect x="1912.9" y="1097.0" width="17.0" height="3.0" fill="#0091d8"/>
<rect x="1912.9" y="1100.0" width="17.0" height="4.0" fill="#97e2ec"/>
<rect x="1912.9" y="1104.0" width="17.0" height="4.0" fill="#9b7368"/>
<rect x="1912.9" y="1108.0" width="17.0" height="5.0" fill="#3b40b5"/>
<rect x="1912.9" y="1113.0" width="17.0" height="8.8" fill="#00c9b5"/>
<rect x="1912.9" y="1121.8" width="17.0" height="31.4" fill="#cb6b00"/>
<rect x="1933.0" y="1149.0" width="17.0" height="4.2" fill="#0091d8"/>
<path d="M1348 1154.2H1951.5" stroke="#4d4d4d" stroke-width="2.4"/>
<text x="1559.9" y="781.1" text-anchor="middle" style="font-size:24px;fill:#2b2b2b;letter-spacing:.55px">$18.19k</text>
<text x="1580.0" y="1006.9" text-anchor="middle" style="font-size:24px;fill:#2b2b2b;letter-spacing:.55px">$6.67k</text>
<text x="1680.4" y="1013.3" text-anchor="middle" style="font-size:24px;fill:#2b2b2b;letter-spacing:.55px">$6.34k</text>
<text x="1800.9" y="1016.4" text-anchor="middle" style="font-size:24px;fill:#2b2b2b;letter-spacing:.55px">$6.16k</text>
<text x="1881.2" y="1014.7" text-anchor="middle" style="font-size:24px;fill:#2b2b2b;letter-spacing:.55px">$6.25k</text>
<text x="1921.4" y="1077" text-anchor="middle" style="font-size:24px;fill:#2b2b2b;letter-spacing:.55px">$3.11k</text>
<text x="1941.5" y="1133.7" text-anchor="middle" style="font-size:24px;fill:#2b2b2b;letter-spacing:.55px">$192.32</text>
<text x="1399.2" y="1137.9" text-anchor="middle" style="font-size:24px;fill:#2b2b2b;letter-spacing:.55px">$6.68</text>
<text x="1459.5" y="1137.9" text-anchor="middle" style="font-size:24px;fill:#2b2b2b;letter-spacing:.55px">$6.68</text>
<text x="1539.8" y="1137.9" text-anchor="middle" style="font-size:24px;fill:#2b2b2b;letter-spacing:.55px">$6.68</text>
<text x="1359.0" y="1183.4" text-anchor="middle" style="font-size:24px;fill:#2b2b2b;letter-spacing:.55px">-$1.24</text>
<text x="1439.4" y="1183.4" text-anchor="middle" style="font-size:24px;fill:#2b2b2b;letter-spacing:.55px">-$1.23</text>
<text x="1519.7" y="1183.4" text-anchor="middle" style="font-size:24px;fill:#2b2b2b;letter-spacing:.55px">-$1.23</text>
<text x="1358.5" y="1284.2" text-anchor="middle" style="font-size:20px;fill:#333333;letter-spacing:.45px">Jan 22</text>
<text x="1459.0" y="1284.2" text-anchor="middle" style="font-size:20px;fill:#333333;letter-spacing:.45px">Jan 27</text>
<text x="1559.4" y="1284.2" text-anchor="middle" style="font-size:20px;fill:#333333;letter-spacing:.45px">Feb 1</text>
<text x="1659.8" y="1284.2" text-anchor="middle" style="font-size:20px;fill:#333333;letter-spacing:.45px">Feb 6</text>
<text x="1760.2" y="1284.2" text-anchor="middle" style="font-size:20px;fill:#333333;letter-spacing:.45px">Feb 11</text>
<text x="1860.6" y="1284.2" text-anchor="middle" style="font-size:20px;fill:#333333;letter-spacing:.45px">Feb 16</text>
</svg>
<svg class="i" style="left:2045px;top:555px" width="743" height="802" viewBox="2045 555 743 802" font-family="Liberation Sans, sans-serif">
<rect x="2066" y="737" width="376.0" height="568.2" fill="#c8d145"/>
<rect x="2446.2" y="737" width="164.1" height="295.7" fill="#0091d8"/>
<rect x="2614.4" y="737" width="153.7" height="295.7" fill="#fedc4b"/>
<rect x="2446.2" y="1036.5" width="200.8" height="91.6" fill="#e4a1f5"/>
<rect x="2446.2" y="1132.1" width="200.8" height="86.1" fill="#97e2ec"/>
<rect x="2446.2" y="1222.2" width="200.8" height="83.0" fill="#9b7368"/>
<rect x="2650.9" y="1036.5" width="69.0" height="137.7" fill="#cb6b00"/>
<rect x="2724" y="1036.5" width="44.1" height="137.7" fill="#00c9b5"/>
<rect x="2650.9" y="1178.3" width="67.0" height="90.3" fill="#471553"/>
<rect x="2721.8" y="1178.3" width="46.3" height="90.3" fill="#3b40b5"/>
<rect x="2650.9" y="1272.8" width="117.2" height="32.4" fill="#ee7898"/>
<rect x="2387.7" y="1237.4" width="58.5" height="43.3" fill="#e8e8ec"/>
<text x="2403" y="1266.6" fill="#444444" style="font-size:23.5px;letter-spacing:.4px">All</text>
<polygon points="2074.8,997.1 2092.4,1006.8000000000001 2074.8,1016.5" fill="#1c1a14"/>
<text x="2102.8" y="1016.2" text-anchor="start" fill="#1c1a14" style="font-size:24px;letter-spacing:.4px">Amazon Elastic Compute Cl…</text>
<text x="2213" y="1041.3" text-anchor="start" fill="#1c1a14" style="font-size:24px;letter-spacing:.6px">$82.67k</text>
<polygon points="2459.1,861 2476.7,870.7 2459.1,880.4" fill="#ffffff"/>
<text x="2487.6" y="880.1" text-anchor="start" fill="#ffffff" style="font-size:24px;letter-spacing:.4px">Amazon…</text>
<text x="2487.6" y="904.4" text-anchor="start" fill="#ffffff" style="font-size:24px;letter-spacing:.6px">$19.15k</text>
<polygon points="2628.2,861 2645.7999999999997,870.7 2628.2,880.4" fill="#1c1a14"/>
<text x="2654.8" y="880.1" text-anchor="start" fill="#1c1a14" style="font-size:24px;letter-spacing:.4px">∑ Othe…</text>
<text x="2650" y="904.4" text-anchor="start" fill="#1c1a14" style="font-size:24px;letter-spacing:.6px">$17.92k</text>
<polygon points="2455.2,1058.7 2472.7999999999997,1068.4 2455.2,1078.1000000000001" fill="#1c1a14"/>
<text x="2483" y="1077.4" text-anchor="start" fill="#1c1a14" style="font-size:24px;letter-spacing:.4px">APN Annual…</text>
<text x="2512.5" y="1101.8" text-anchor="start" fill="#1c1a14" style="font-size:24px;letter-spacing:.6px">$7.45k</text>
<polygon points="2462.9,1151.3 2480.5,1161.0 2462.9,1170.7" fill="#1c1a14"/>
<text x="2490.7" y="1170.1" text-anchor="start" fill="#1c1a14" style="font-size:24px;letter-spacing:.4px">Amazon Si…</text>
<text x="2512.5" y="1194.5" text-anchor="start" fill="#1c1a14" style="font-size:24px;letter-spacing:.6px">$7.01k</text>
<polygon points="2455.2,1240 2472.7999999999997,1249.7 2455.2,1259.4" fill="#ffffff"/>
<text x="2483" y="1258.9" text-anchor="start" fill="#ffffff" style="font-size:24px;letter-spacing:.4px">Amazon Virt…</text>
<text x="2512.5" y="1283.4" text-anchor="start" fill="#ffffff" style="font-size:24px;letter-spacing:.6px">$6.77k</text>
<polygon points="2665.8,1081.9 2683.4,1091.6000000000001 2665.8,1101.3000000000002" fill="#ffffff"/>
<text x="2685.5" y="1100.5" text-anchor="start" fill="#ffffff" style="font-size:24px;letter-spacing:.4px">…</text>
<text x="2671.2" y="1125" text-anchor="start" fill="#ffffff" style="font-size:24px;letter-spacing:.6px">$…</text>
<polygon points="2737.2,1081.9 2754.7999999999997,1091.6000000000001 2737.2,1101.3000000000002" fill="#1c1a14"/>
<polygon points="2663.3,1200.3 2680.9,1210.0 2663.3,1219.7" fill="#ffffff"/>
<text x="2691" y="1219" text-anchor="start" fill="#ffffff" style="font-size:24px;letter-spacing:.4px">A</text>
<text x="2670.4" y="1242.9" text-anchor="start" fill="#ffffff" style="font-size:24px;letter-spacing:.6px">$2.</text>
<polygon points="2735.9,1200.3 2753.5,1210.0 2735.9,1219.7" fill="#ffffff"/>
<text x="2741.2" y="1242.9" text-anchor="start" fill="#ffffff" style="font-size:24px;letter-spacing:.6px">$</text>
</svg>
</main></div></body></html>
